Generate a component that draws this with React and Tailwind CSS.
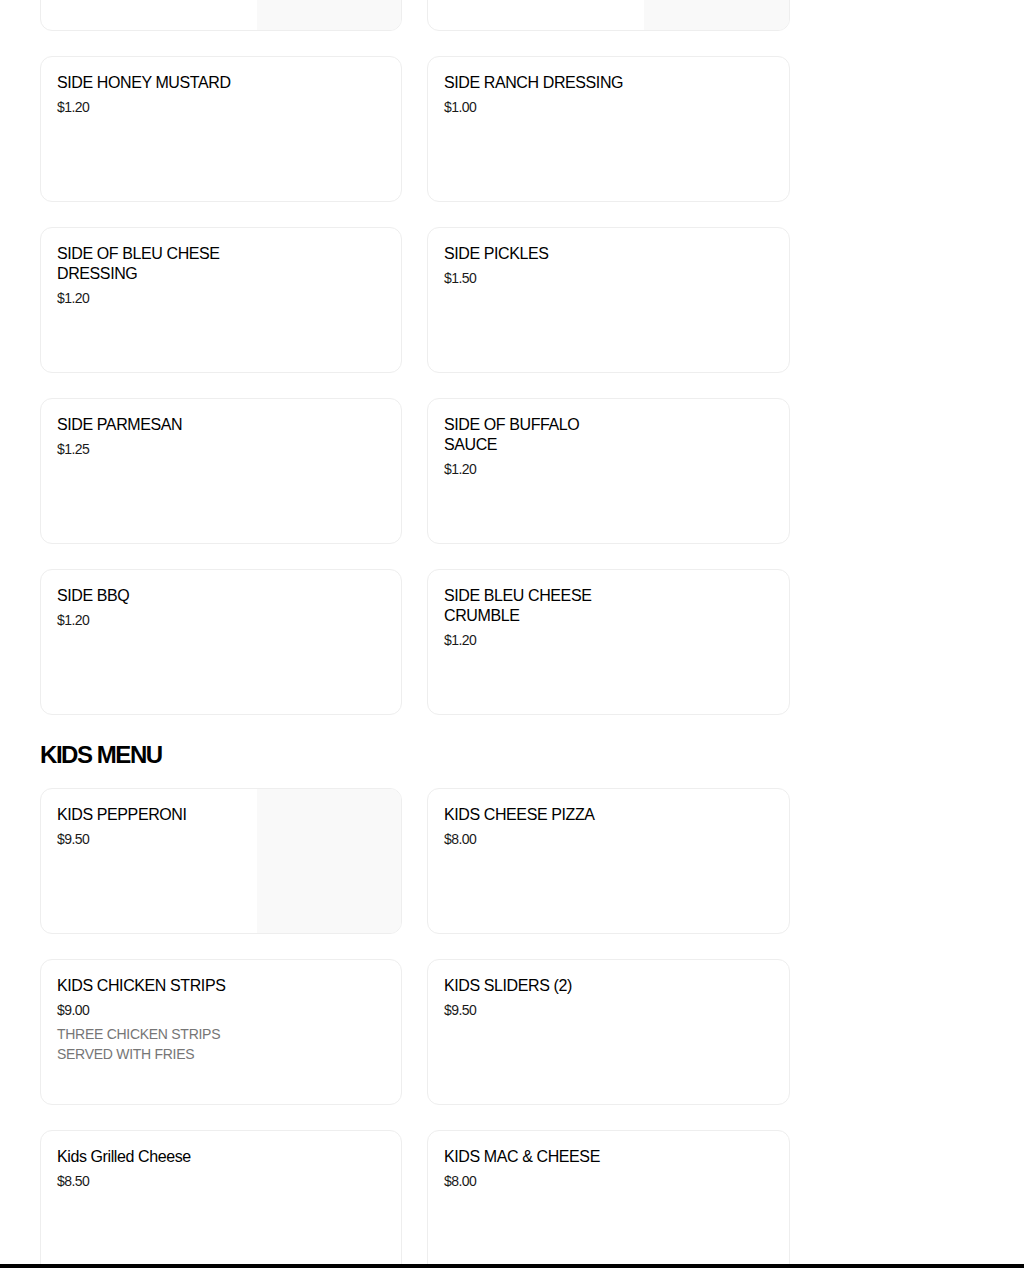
const sides = [
  { name: 'SIDE ITEM', price: '', image: true, hidden: true },
  { name: 'SIDE ITEM', price: '', image: true, hidden: true },
  { name: 'SIDE HONEY MUSTARD', price: '$1.20' },
  { name: 'SIDE RANCH DRESSING', price: '$1.00' },
  { name: 'SIDE OF BLEU CHESE DRESSING', price: '$1.20' },
  { name: 'SIDE PICKLES', price: '$1.50' },
  { name: 'SIDE PARMESAN', price: '$1.25' },
  { name: 'SIDE OF BUFFALO SAUCE', price: '$1.20' },
  { name: 'SIDE BBQ', price: '$1.20' },
  { name: 'SIDE BLEU CHEESE CRUMBLE', price: '$1.20' },
];

const kids = [
  { name: 'KIDS PEPPERONI', price: '$9.50', image: true },
  { name: 'KIDS CHEESE PIZZA', price: '$8.00' },
  { name: 'KIDS CHICKEN STRIPS', price: '$9.00', desc: 'THREE CHICKEN STRIPS SERVED WITH FRIES' },
  { name: 'KIDS SLIDERS (2)', price: '$9.50' },
  { name: 'Kids Grilled Cheese', price: '$8.50' },
  { name: 'KIDS MAC & CHEESE', price: '$8.00' },
];

const MenuCard = ({ item }) => (
  <div className="flex h-[146px] rounded-xl border border-[#eeeeee] bg-white overflow-hidden">
    <div className="w-[216px] shrink-0 px-4 pt-4">
      {!item.hidden && (
        <>
          <h3 className="text-[16px] leading-5 text-black tracking-[-0.025em]">{item.name}</h3>
          <p className="mt-1 text-[14px] leading-5 text-[#1a1a1a] tracking-[-0.04em]">{item.price}</p>
          {item.desc && (
            <p className="mt-1 text-[14px] leading-5 text-[#767676] tracking-[-0.02em]">{item.desc}</p>
          )}
        </>
      )}
    </div>
    <div className={`flex-1 ${item.image ? 'bg-[#f9f9f9]' : ''}`} />
  </div>
);

export default function App() {
  return (
    <div className="min-h-screen bg-white overflow-hidden" style={{ fontFamily: '"Liberation Sans", Arial, sans-serif' }}>
      <div className="w-[750px] ml-[40px] -mt-[115px] pb-10">
        <div className="grid grid-cols-[362px_363px] gap-[25px]">
          {sides.map((item, i) => (
            <MenuCard key={i} item={item} />
          ))}
        </div>
        <h2 className="pt-6 pb-[17px] text-[24px] leading-8 font-bold tracking-[-0.06em] text-black">KIDS MENU</h2>
        <div className="grid grid-cols-[362px_363px] gap-[25px]">
          {kids.map((item, i) => (
            <MenuCard key={i} item={item} />
          ))}
        </div>
      </div>
      <div className="fixed bottom-0 left-0 right-0 h-[4px] bg-black" />
    </div>
  );
}
